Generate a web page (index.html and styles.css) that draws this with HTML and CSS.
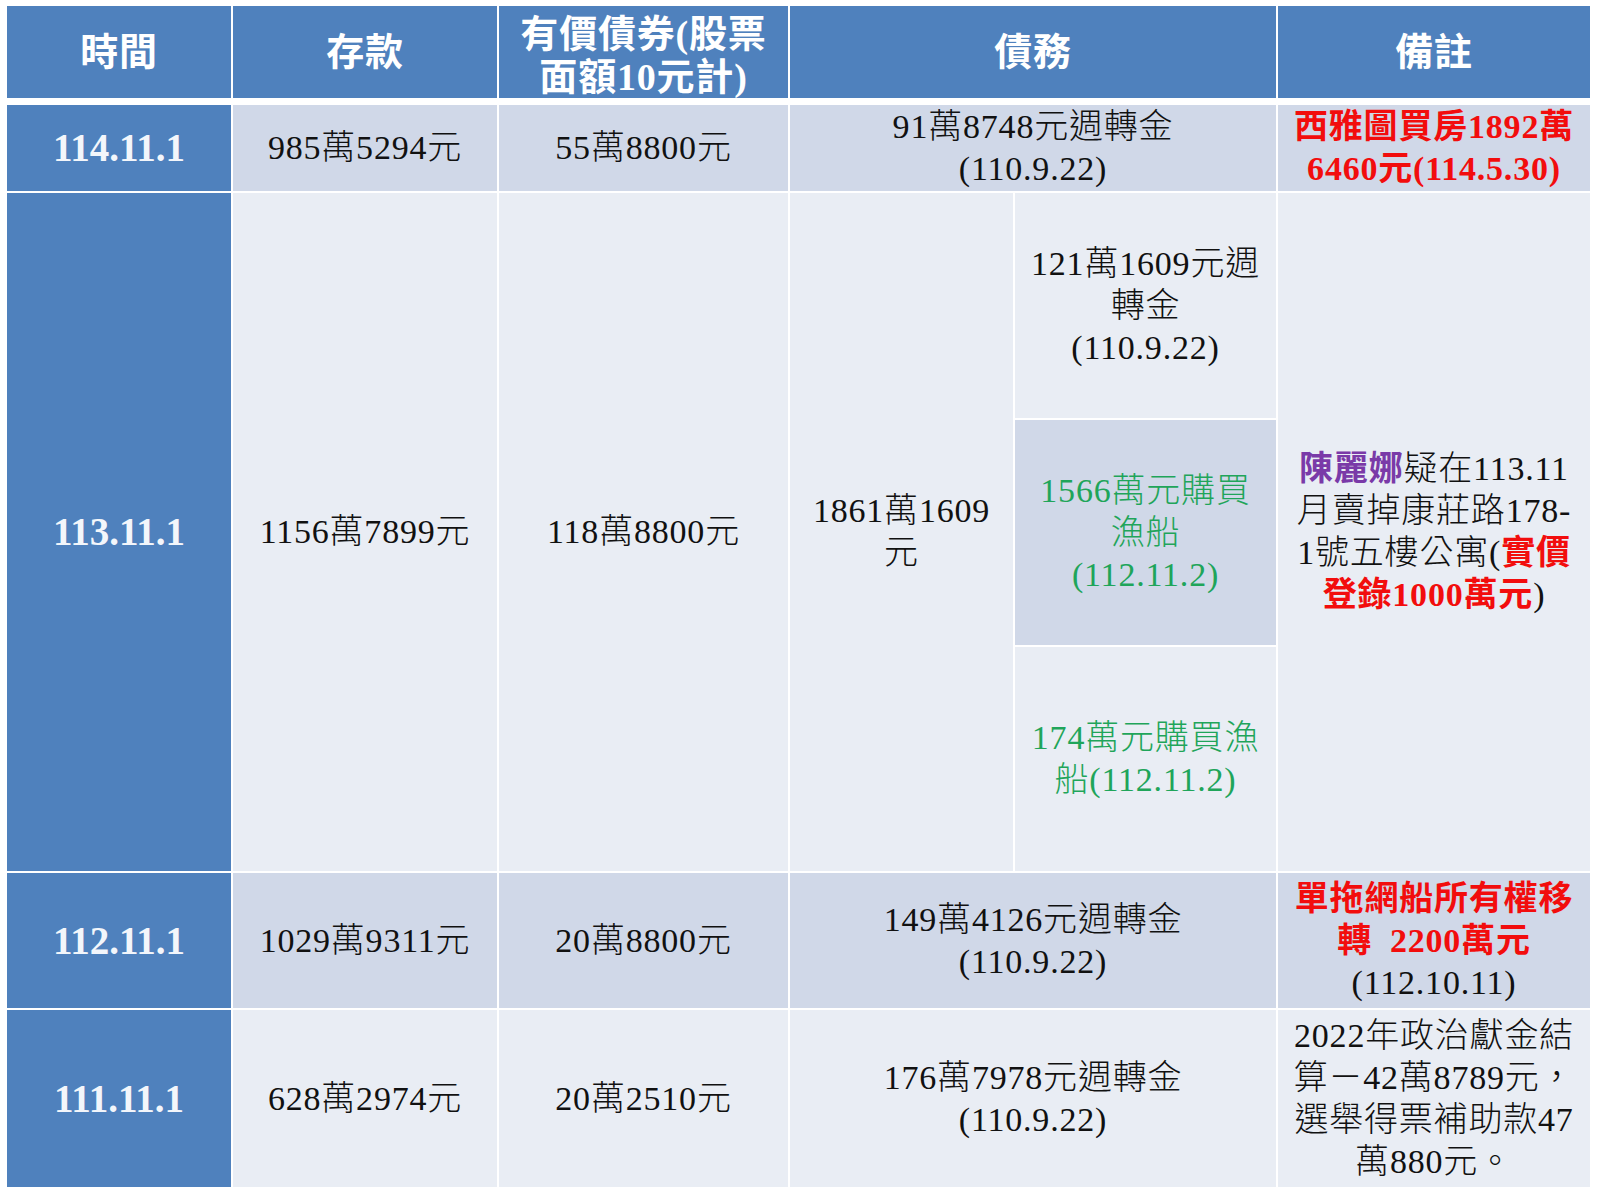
FILE: index.html
```html
<!DOCTYPE html>
<html lang="zh-Hant">
<head>
<meta charset="utf-8">
<title>資產債務表</title>
<link rel="stylesheet" href="styles.css">
</head>
<body>
<div class="sheet">
  <div class="c hd">時間</div>
  <div class="c hd">存款</div>
  <div class="c hd hd-two">有價債券(股票<br>面額10元計)</div>
  <div class="c hd span2">債務</div>
  <div class="c hd">備註</div>

  <div class="c date">114.11.1</div>
  <div class="c dark">985萬5294元</div>
  <div class="c dark">55萬8800元</div>
  <div class="c dark span2">91萬8748元週轉金<br>(110.9.22)</div>
  <div class="c dark red">西雅圖買房1892萬<br>6460元(114.5.30)</div>

  <div class="c date rspan3">113.11.1</div>
  <div class="c light rspan3">1156萬7899元</div>
  <div class="c light rspan3">118萬8800元</div>
  <div class="c light rspan3">1861萬1609<br>元</div>
  <div class="c light">121萬1609元週<br>轉金<br>(110.9.22)</div>
  <div class="c light rspan3"><span class="block"><span class="purple">陳麗娜</span>疑在113.11<br>月賣掉康莊路178-<br>1號五樓公寓(<span class="red">實價</span><br><span class="red">登錄1000萬元</span>)</span></div>
  <div class="c dark green">1566萬元購買<br>漁船<br>(112.11.2)</div>
  <div class="c light green">174萬元購買漁<br>船(112.11.2)</div>

  <div class="c date">112.11.1</div>
  <div class="c dark">1029萬9311元</div>
  <div class="c dark">20萬8800元</div>
  <div class="c dark span2">149萬4126元週轉金<br>(110.9.22)</div>
  <div class="c dark"><span class="block"><span class="red">單拖網船所有權移<br>轉&ensp;2200萬元</span><br>(112.10.11)</span></div>

  <div class="c date">111.11.1</div>
  <div class="c light">628萬2974元</div>
  <div class="c light">20萬2510元</div>
  <div class="c light span2">176萬7978元週轉金<br>(110.9.22)</div>
  <div class="c light">2022年政治獻金結<br>算－42萬8789元，<br>選舉得票補助款47<br>萬880元。</div>
</div>
</body>
</html>
```

FILE: styles.css
```css
html, body {
  margin: 0;
  padding: 0;
  background: #ffffff;
}

.sheet {
  display: grid;
  width: 1583px;
  margin: 6px 0 0 7px;
  grid-template-columns: 224px 264px 289px 223px 261px 312px;
  grid-template-rows: 97px 86px 225px 225px 224px 135px 177px;
  gap: 2px;
  font-family: "Liberation Serif", "Noto Sans CJK TC", serif;
  font-size: 34px;
  font-weight: 300;
  line-height: 42px;
  letter-spacing: 0.8px;
  color: #111111;
}

.c {
  display: flex;
  align-items: center;
  justify-content: center;
  text-align: center;
  white-space: nowrap;
}

.block {
  display: block;
}

.span2 {
  grid-column: span 2;
}

.rspan3 {
  grid-row: span 3;
}

.hd {
  background: #4f81bd;
  color: #ffffff;
  font-weight: 700;
  font-size: 38px;
  line-height: 43px;
  margin-bottom: 5px;
}

.hd-two {
  padding-top: 8px;
}

.date {
  background: #4f81bd;
  color: #f3f6fb;
  font-weight: 700;
  font-size: 39px;
  letter-spacing: 0;
}

.dark {
  background: #d0d8e8;
}

.light {
  background: #e9edf4;
}

.red {
  color: #f20d0d;
  font-weight: 700;
}

.green {
  color: #1fa55a;
}

.purple {
  color: #7a3aa8;
  font-weight: 700;
}
```
